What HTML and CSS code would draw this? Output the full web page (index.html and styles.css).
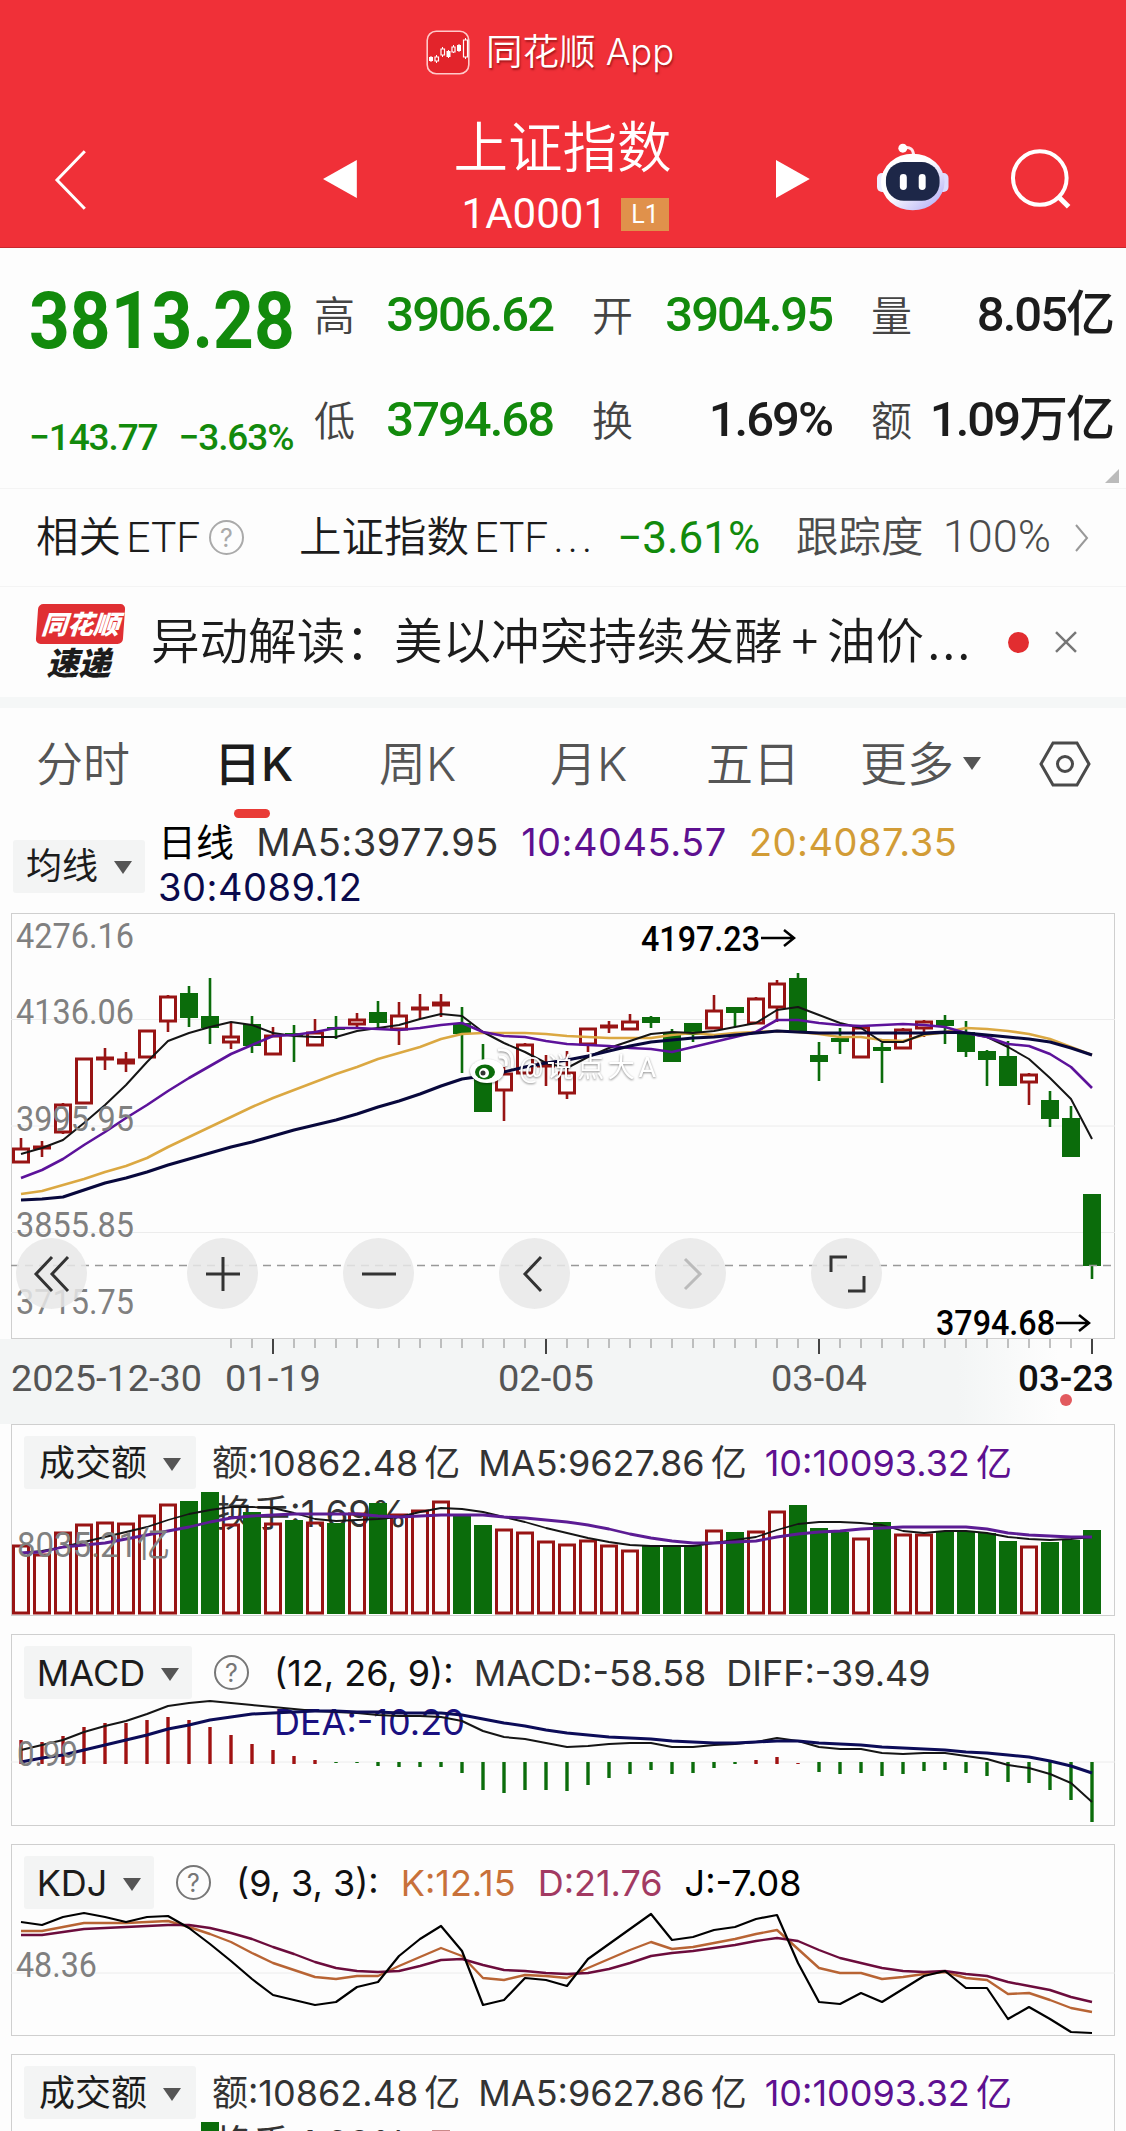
FILE: index.html
```html
<!DOCTYPE html>
<html lang="zh-CN">
  <head>
    <meta charset="UTF-8" />
    <meta name="viewport" content="width=device-width, initial-scale=1.0" />
    <title>上证指数 1A0001</title>
    <link rel="stylesheet" href="styles.css">
  </head>

  <body>
    <header>
      <div class="brand">
        <svg width="44" height="45" viewBox="0 0 44 45">
          <rect x="1.2" y="1.2" width="41.6" height="42.6" rx="9" fill="#e3242b" stroke="#ffc9c9" stroke-width="1.6" />
          <path d="M5 26v6M10.500 25v8M16.500 17v10M22.500 20v8M27.500 15v8M33 14v8M39.500 8v21" stroke="#fff" stroke-width="1" />
          <path d="M3 27h4v4h-4zM20.500 21h4v6h-4zM31 15h4v6h-4z" fill="#fff" />
          <path d="M9 27h3.500v4h-3.500zM15 19h3.500v6h-3.500zM26 17h3v5h-3zM37.500 10h4v17h-4z" fill="#dc1d24" stroke="#fff" stroke-width="1.200" />
        </svg>
        <span>同花顺 App</span>
      </div>
      <nav class="topbar">
        <svg class="back" width="34" height="62" viewBox="0 0 34 62"><path d="M31 2L3 31l28 29" fill="none" stroke="#fff" stroke-width="3" /></svg>
        <svg class="prev" width="34" height="38" viewBox="0 0 34 38"><path d="M0 19L34 0v38z" fill="#fff" /></svg>
        <div class="title">
          <h1>上证指数</h1>
          <p>1A0001<b>L1</b></p>
        </div>
        <svg class="next" width="34" height="38" viewBox="0 0 34 38"><path d="M34 19L0 0v38z" fill="#fff" /></svg>
        <svg class="robot" width="74" height="68" viewBox="0 0 74 68">
          <defs>
            <linearGradient id="shell" x1="0" y1="0" x2="1" y2="1">
              <stop offset="0.450" stop-color="#fff" />
              <stop offset="1" stop-color="#a9a4f5" />
            </linearGradient>
          </defs>
          <path d="M27 5q11-3 11 9" fill="none" stroke="#ffe9ee" stroke-width="3" />
          <circle cx="27" cy="5" r="4.500" fill="#fff" />
          <rect x="1" y="30" width="11" height="19" rx="5" fill="#eef" />
          <rect x="62" y="30" width="11" height="19" rx="5" fill="#dcdcff" />
          <ellipse cx="37" cy="39" rx="32" ry="28.500" fill="url(#shell)" />
          <rect x="10" y="19" width="54" height="39" rx="18" fill="#1d2748" />
          <rect x="24" y="31" width="7" height="16" rx="3.500" fill="#fff" />
          <rect x="43" y="31" width="7" height="16" rx="3.500" fill="#fff" />
        </svg>
        <svg class="find" width="62" height="62" viewBox="0 0 62 62"><g fill="none" stroke="#fff" stroke-width="4"><circle cx="30" cy="30" r="27" /><path d="M48 48l11 11" stroke-width="5" /></g></svg>
      </nav>
    </header>

    <section class="quote">
      <div class="price">
        <strong>3813.28</strong>
        <p><span>−143.77</span><span>−3.63%</span></p>
      </div>
      <dl>
        <div><dt>高</dt><dd class="down">3906.62</dd></div>
        <div><dt>开</dt><dd class="down">3904.95</dd></div>
        <div><dt>量</dt><dd>8.05亿</dd></div>
        <div><dt>低</dt><dd class="down">3794.68</dd></div>
        <div><dt>换</dt><dd>1.69%</dd></div>
        <div><dt>额</dt><dd>1.09万亿</dd></div>
      </dl>
      <i class="corner"></i>
    </section>

    <section class="etf">
      <span class="rel">相关 ETF</span>
      <i class="help">?</i>
      <span class="name">上证指数 ETF <i>...</i></span>
      <span class="rate">−3.61%</span>
      <span class="track">跟踪度 <b>100%</b></span>
      <svg width="16" height="30" viewBox="0 0 16 30"><path d="M2 2l11 13L2 28" fill="none" stroke="#999" stroke-width="2" /></svg>
    </section>

    <section class="news">
      <div class="tag"><b>同花顺</b><em>速递</em></div>
      <p>异动解读：美以冲突持续发酵 + 油价<i>...</i></p>
      <i class="dot"></i>
      <svg width="24" height="24" viewBox="0 0 24 24"><path d="M2 2l20 20M22 2L2 22" stroke="#777" stroke-width="2.500" /></svg>
    </section>

    <ul class="tabs">
      <li>分时</li>
      <li class="active">日K</li>
      <li>周K</li>
      <li>月K</li>
      <li>五日</li>
      <li class="more">更多<i class="arrow"></i></li>
      <li class="gear">
        <svg width="52" height="46" viewBox="0 0 52 46"><g fill="none" stroke="#4a4a4a" stroke-width="3"><path d="M14 2h24l12 21-12 21H14L2 23z" /><circle cx="26" cy="23" r="7.500" /></g></svg>
      </li>
    </ul>

    <section class="ma">
      <button>均线<i class="arrow"></i></button>
      <p>
        <span class="cn">日线</span>
        <span>MA5:3977.95</span>
        <span class="purple">10:4045.57</span>
        <span class="gold">20:4087.35</span>
        <span class="navy">30:4089.12</span>
      </p>
    </section>

    <section class="panel kline">
      <svg id="kline" class="chart"></svg>
      <div class="tools">
        <button><svg width="40" height="40" viewBox="0 0 40 40"><path d="M20 3L4 20l16 17M36 3L20 20l16 17" /></svg></button>
        <button><svg width="40" height="40" viewBox="0 0 40 40"><path d="M20 3v34M3 20h34" /></svg></button>
        <button><svg width="40" height="40" viewBox="0 0 40 40"><path d="M3 20h34" /></svg></button>
        <button><svg width="40" height="40" viewBox="0 0 40 40"><path d="M26 3L10 20l16 17" /></svg></button>
        <button class="off"><svg width="40" height="40" viewBox="0 0 40 40"><path d="M14 5l15 15-15 15" /></svg></button>
        <button><svg width="40" height="40" viewBox="0 0 40 40"><path d="M4 18V3h16M37 22v15H21" /></svg></button>
      </div>
    </section>
    <svg id="axis" class="axis"></svg>

    <section class="panel volume">
      <div class="legend">
        <button>成交额<i class="arrow"></i></button>
        <span>额:10862.48 亿</span>
        <span>MA5:9627.86 亿</span>
        <span class="purple">10:10093.32 亿</span>
      </div>
      <p class="turnover">换手:1.69%</p>
      <svg class="chart vol"></svg>
    </section>

    <section class="panel macd">
      <div class="legend">
        <button>MACD<i class="arrow"></i></button>
        <i class="help">?</i>
        <span class="args">(12, 26, 9):</span>
        <span>MACD:-58.58</span>
        <span>DIFF:-39.49</span>
      </div>
      <p class="dea">DEA:-10.20</p>
      <svg id="macd" class="chart"></svg>
    </section>

    <section class="panel kdj">
      <div class="legend">
        <button>KDJ<i class="arrow"></i></button>
        <i class="help">?</i>
        <span class="args">(9, 3, 3):</span>
        <span class="orange">K:12.15</span>
        <span class="wine">D:21.76</span>
        <span class="black">J:-7.08</span>
      </div>
      <svg id="kdj" class="chart"></svg>
    </section>

    <section class="panel volume">
      <div class="legend">
        <button>成交额<i class="arrow"></i></button>
        <span>额:10862.48 亿</span>
        <span>MA5:9627.86 亿</span>
        <span class="purple">10:10093.32 亿</span>
      </div>
      <p class="turnover">换手:1.69%</p>
      <svg class="chart vol"></svg>
    </section>

    <script src="script.js"></script>
  </body>
</html>
```
FILE: styles.css
```css
* {
  box-sizing: border-box;
  margin: 0;
  padding: 0;
}

html {
  height: 2131px;
  overflow: hidden;
}

body {
  width: 1126px;
  height: 2131px;
  overflow: hidden;
  background: #fdfdfd;
  color: #1c1c1c;
  font-family: Roboto, "Noto Sans CJK SC", sans-serif;
}

svg {
  display: block;
}

button {
  border: none;
  font: inherit;
  color: #1c1c1c;
}

i,
em {
  font-style: normal;
}

header {
  height: 248px;
  padding-top: 30px;
  background: #f03038;
  color: #fff;
  border-bottom: 1px solid #c8282e;
}

.brand {
  display: flex;
  align-items: center;
  height: 45px;
  padding-left: 426px;
  gap: 16px;
  font: 350 36.5px/45px Inter, "Noto Sans CJK SC", sans-serif;
  text-shadow: 1px 2px 2px rgba(90, 0, 0, 0.5);
}

.topbar {
  display: flex;
  align-items: center;
  padding: 47px 54px 0 54px;
}

.back {
  margin-top: 2px;
  margin-right: 235px;
}

.title {
  width: 220px;
  margin-top: -11px;
  margin-left: 97px;
  margin-right: 104px;
}

.title h1 {
  font: 350 54.5px/66px "Noto Sans CJK SC", sans-serif;
  white-space: nowrap;
}

.title p {
  display: flex;
  align-items: center;
  padding-left: 8px;
  margin-top: 15px;
  font-size: 42px;
  line-height: 44px;
}

.title b {
  width: 48px;
  height: 33px;
  margin-left: 14px;
  background: #e0914b;
  font: 400 25px/34px Roboto, sans-serif;
  text-align: center;
}

.robot {
  margin: -5px 61px 0 66px;
}

.quote {
  position: relative;
  display: flex;
  height: 240px;
  padding: 0 13px 0 29px;
}

.price {
  width: 285px;
  color: #128a0c;
}

.price strong {
  display: block;
  height: 148px;
  padding-top: 26px;
  font: 700 80px/94px Roboto, sans-serif;
  transform: scaleX(0.89);
  transform-origin: left;
}

.price p {
  display: flex;
  gap: 21px;
  padding-top: 20px;
  font: 500 37px/44px Roboto, sans-serif;
  letter-spacing: -1.1px;
}

dl {
  flex: 1;
  display: grid;
  grid-template-columns: 239px 279px 1fr;
  grid-template-rows: 105px 105px;
  padding-top: 14px;
}

dl div {
  display: flex;
  align-items: center;
  justify-content: space-between;
  padding-left: 39px;
}

dl div:nth-child(3n + 1) {
  padding-left: 0;
}

dt {
  margin-top: -3px;
  font: 350 41px/60px "Noto Sans CJK SC", sans-serif;
  color: #444;
}

dd {
  font-size: 49px;
  line-height: 60px;
  font-weight: 500;
  letter-spacing: -2px;
  white-space: nowrap;
}

.down {
  color: #128a0c;
}

.corner {
  position: absolute;
  right: 7px;
  bottom: 5px;
  border: 7px solid #bbb;
  border-top-color: transparent;
  border-left-color: transparent;
}

.etf {
  display: flex;
  align-items: center;
  height: 98px;
  padding: 0 36px;
  border-top: 1px solid #f4f4f4;
  font: 350 42.5px/60px Roboto, "Noto Sans CJK SC", sans-serif;
  word-spacing: -5px;
  white-space: nowrap;
}

.help {
  flex: none;
  width: 35px;
  height: 35px;
  border: 2px solid #777;
  border-radius: 50%;
  color: #777;
  font: 400 25px/32px Inter, sans-serif;
  text-align: center;
}

.etf .rel {
  width: 163px;
}

.etf .help {
  margin-left: 10px;
  border-color: #aaa;
  color: #aaa;
}

.etf .name {
  width: 318px;
  margin-left: 55px;
}

.etf .name i {
  letter-spacing: 4px;
}

.etf .rate {
  width: 179px;
  color: #128a0c;
  font-size: 44px;
  font-weight: 400;
}

.etf .track {
  width: 278px;
  color: #4c4c4c;
}

.etf .track b {
  margin-left: 14px;
  font-size: 45px;
  font-weight: 350;
}

.news {
  display: flex;
  align-items: center;
  height: 111px;
  padding: 0 48px 0 37px;
  border-top: 1px solid #f4f4f4;
}

.tag {
  width: 87px;
  margin-top: -2px;
  font: italic 900 29px/34px "Noto Sans CJK SC", sans-serif;
  text-align: center;
}

.tag b {
  display: block;
  height: 40px;
  border-radius: 5px;
  background: #e02f33;
  color: #fff;
  font-size: 26px;
  line-height: 38px;
  transform: skewX(-4deg);
}

.tag em {
  display: block;
  margin-left: -4px;
  font-size: 32px;
  font-style: italic;
}

.news p {
  width: 859px;
  margin-top: -8px;
  padding-left: 27px;
  font: 350 48.6px/70px "Noto Sans CJK SC", sans-serif;
  word-spacing: -2px;
  white-space: nowrap;
}

.news p i {
  margin-left: 3px;
  letter-spacing: 2px;
}

.news .dot {
  width: 21px;
  height: 21px;
  margin: 0 25px 0 26px;
  border-radius: 50%;
  background: #e22d30;
}

.tabs {
  display: flex;
  align-items: center;
  height: 121px;
  padding: 2px 0 0 36px;
  border-top: 11px solid #f5f7f7;
  list-style: none;
  color: #555;
  font: 350 47px/66px Inter, "Noto Sans CJK SC", sans-serif;
  white-space: nowrap;
}

.tabs li {
  position: relative;
  flex: none;
  width: 171px;
}

.tabs li:nth-child(1) {
  width: 178px;
}

.tabs .active {
  width: 165px;
  color: #1c1c1c;
  font-weight: 500;
}

.tabs .active::after {
  content: "";
  position: absolute;
  left: 20px;
  bottom: -21px;
  width: 36px;
  height: 9px;
  border-radius: 5px;
  background: #e93b36;
}

.tabs li:nth-child(4) {
  width: 156px;
}

.tabs li:nth-child(5) {
  width: 154px;
}

.tabs .more {
  width: 179px;
}

.tabs .gear {
  width: 52px;
}

.arrow {
  display: inline-block;
  margin-left: 16px;
  vertical-align: 5px;
  border: 9px solid transparent;
  border-top: 13px solid #555;
  border-bottom: 0;
}

.tabs .arrow {
  margin-left: 9px;
  vertical-align: 11px;
}

.ma {
  display: flex;
  height: 95px;
  padding-left: 13px;
  font: 400 36px/45px Inter, "Noto Sans CJK SC", sans-serif;
}

.ma button,
.legend button {
  height: 53px;
  background: #f3f4f4;
  border-radius: 3px;
}

.ma button {
  width: 132px;
  margin-top: 22px;
}

.ma p {
  width: 850px;
  padding: 2px 0 0 13px;
  color: #333;
  font-size: 38px;
  letter-spacing: 0.5px;
}

.ma span {
  margin-right: 11px;
}

.ma .cn {
  margin-right: 11px;
  color: #000;
  letter-spacing: 0;
}

.purple {
  color: #5e1090;
}

.ma .gold {
  color: #d29c36;
}

.ma .navy {
  color: #0a0a4c;
}

.ma .purple {
  color: #5e1090;
}

.orange {
  color: #c8713a;
}

.wine {
  color: #a23a62;
}

.panel .black {
  color: #000;
}

.panel {
  position: relative;
  width: 1104px;
  height: 192px;
  margin: 0 0 18px 11px;
  border: 1px solid #cfcfcf;
}

.panel.kline {
  height: 426px;
  margin-bottom: 0;
}

.chart {
  position: absolute;
  left: -1px;
  top: -1px;
  width: 1104px;
  height: 100%;
  overflow: visible;
}

.tools {
  position: absolute;
  left: 4px;
  bottom: 29px;
  display: flex;
  gap: 85px;
}

.tools button {
  display: flex;
  align-items: center;
  justify-content: center;
  width: 71px;
  height: 71px;
  border-radius: 50%;
  background: rgba(232, 232, 232, 0.85);
}

.tools button:first-child {
  margin-right: 15px;
}

.tools path {
  fill: none;
  stroke: #333;
  stroke-width: 3;
}

.tools .off path {
  stroke: #bbb;
}

.axis {
  width: 1126px;
  height: 85px;
  background: linear-gradient(90deg, #f3f5f5 85%, #fdfdfd 94%);
}

.legend {
  display: flex;
  align-items: center;
  height: 53px;
  margin: 11px 0 0 12px;
  color: #333;
  font: 400 36px/44px Inter, "Noto Sans CJK SC", sans-serif;
  white-space: nowrap;
}

.legend span {
  margin-left: 20px;
}

.volume span {
  margin-left: 16px;
  word-spacing: -4px;
}

.volume span + span {
  margin-left: 18px;
}

.legend .help {
  margin-left: 22px;
}

.legend .args {
  margin-left: 25px;
  color: #111;
}

.kdj span {
  margin-left: 22px;
}

.volume button {
  width: 172px;
}

.macd button {
  width: 168px;
}

.kdj button {
  width: 130px;
}

.turnover,
.dea {
  margin-left: 204px;
  font: 400 37px/50px Inter, "Noto Sans CJK SC", sans-serif;
  color: #333;
}

.dea {
  margin-left: 262px;
  margin-top: -2px;
  font-size: 36px;
  color: #1a1080;
}

.panel text {
  font-family: Roboto, "Noto Sans CJK SC", sans-serif;
  font-size: 35px;
  fill: #808080;
}

.panel .mark {
  fill: #000;
  font-weight: 500;
}

.water {
  filter: drop-shadow(0 1px 1px rgba(0, 0, 0, 0.45));
}

.panel .water text {
  fill: #fff;
  font-size: 27px;
}

.axis text {
  font-family: Roboto, sans-serif;
  font-size: 36px;
  fill: #555;
}

.axis .last {
  fill: #111;
  font-weight: 500;
}
```
FILE: script.js
```js
// each day: u/d, then high, body top, body bottom, low (px from the top of the chart)
var days = [
  ['u', 225, 235, 250, 250], ['u', 228, 233, 235, 244], ['u', 190, 191, 220, 221], ['u', 145, 145, 191, 191],
  ['u', 135, 144, 147, 157], ['u', 139, 146, 151, 159], ['u', 117, 117, 145, 145], ['u', 82, 83, 109, 119],
  ['d', 73, 80, 105, 114], ['d', 65, 103, 115, 131], ['u', 109, 123, 130, 136], ['d', 103, 111, 133, 140],
  ['u', 114, 122, 142, 142], ['d', 112, 120, 123, 149], ['u', 106, 119, 133, 133], ['d', 103, 114, 117, 126],
  ['u', 100, 106, 112, 115], ['d', 88, 99, 110, 115], ['u', 89, 102, 117, 132], ['u', 81, 94, 96, 106],
  ['u', 81, 89, 93, 104], ['d', 94, 110, 121, 160], ['d', 131, 150, 199, 199], ['u', 154, 160, 178, 208],
  ['u', 130, 131, 161, 161], ['u', 142, 150, 154, 173], ['u', 138, 159, 181, 186], ['u', 115, 115, 132, 139],
  ['u', 108, 112, 114, 120], ['u', 101, 108, 117, 117], ['d', 103, 104, 110, 115], ['d', 116, 119, 149, 149],
  ['d', 110, 110, 122, 129], ['u', 82, 97, 116, 116], ['d', 94, 94, 100, 114], ['u', 84, 85, 111, 111],
  ['u', 67, 70, 95, 109], ['d', 60, 65, 119, 119], ['d', 129, 142, 149, 168], ['d', 115, 125, 129, 141],
  ['u', 112, 114, 145, 145], ['d', 130, 134, 138, 170], ['u', 115, 116, 136, 136], ['u', 107, 108, 116, 124],
  ['d', 102, 107, 113, 131], ['d', 108, 119, 139, 144], ['d', 137, 138, 147, 173], ['d', 128, 143, 173, 173],
  ['u', 160, 161, 170, 192], ['d', 178, 187, 206, 214], ['d', 193, 205, 244, 244], ['d', 281, 281, 353, 366]
];

var ma5 = [241, 235, 227, 210, 192, 172, 149, 128, 120, 114, 109, 112, 120, 123, 124, 124, 118, 115, 112, 106, 101, 103, 119, 130, 139, 150, 155, 144, 135, 128, 121, 119, 120, 118, 114, 110, 97, 94, 102, 110, 115, 129, 129, 121, 120, 120, 124, 134, 146, 165, 186, 226];
var ma10 = [265, 257, 246, 232, 219, 205, 192, 178, 165, 153, 141, 132, 123, 122, 119, 115, 115, 116, 117, 115, 112, 110, 119, 123, 124, 128, 131, 132, 133, 135, 136, 139, 134, 129, 124, 119, 107, 107, 110, 112, 113, 112, 111, 112, 114, 120, 124, 131, 133, 141, 154, 175];
var ma20 = [281, 278, 272, 266, 259, 253, 245, 234, 224, 214, 204, 194, 185, 177, 169, 161, 154, 146, 140, 134, 126, 121, 120, 120, 120, 121, 123, 124, 125, 125, 125, 122, 120, 122, 120, 119, 118, 119, 121, 124, 124, 127, 128, 122, 119, 115, 116, 118, 121, 126, 134, 142];
var ma30 = [287, 286, 284, 277, 270, 265, 259, 252, 246, 240, 234, 229, 223, 217, 212, 207, 201, 194, 188, 181, 173, 166, 163, 159, 154, 150, 147, 143, 138, 133, 129, 127, 125, 124, 122, 120, 118, 119, 120, 120, 120, 120, 120, 120, 119, 120, 122, 124, 126, 129, 135, 142];

var volume = [69, 60, 82, 90, 92, 91, 99, 110, 113, 122, 90, 102, 91, 94, 92, 91, 101, 111, 100, 104, 113, 98, 89, 85, 82, 73, 70, 74, 69, 64, 69, 68, 68, 84, 82, 83, 103, 109, 86, 82, 76, 92, 80, 80, 83, 83, 81, 73, 68, 72, 74, 84];
var vol5 = [129, 127, 123, 118, 113, 108, 103, 96, 90, 86, 83, 83, 84, 89, 95, 97, 96, 95, 93, 88, 84, 85, 88, 93, 98, 104, 109, 114, 118, 121, 122, 122, 122, 119, 116, 113, 106, 100, 98, 98, 99, 101, 107, 109, 107, 107, 109, 113, 115, 116, 115, 113];
var vol10 = [129, 128, 123, 121, 119, 115, 111, 107, 103, 98, 94, 92, 91, 90, 90, 90, 90, 92, 93, 92, 91, 91, 91, 93, 94, 96, 98, 101, 105, 110, 114, 117, 119, 119, 118, 117, 113, 110, 108, 107, 105, 104, 103, 103, 103, 103, 105, 109, 111, 112, 113, 113];

var macd = [24, 22, 28, 37, 41, 41, 44, 47, 44, 37, 29, 20, 14, 8, 4, -1, -1, -4, -5, -5, -5, -11, -28, -31, -28, -28, -29, -23, -16, -12, -8, -12, -11, -6, -2, 4, 7, 1, -10, -12, -11, -14, -12, -9, -8, -11, -14, -20, -21, -28, -38, -60];
var diff = [116, 111, 106, 98, 92, 87, 80, 72, 69, 67, 69, 71, 73, 75, 77, 78, 79, 81, 82, 82, 83, 87, 97, 103, 105, 109, 113, 112, 110, 109, 109, 113, 113, 111, 110, 108, 104, 107, 113, 115, 115, 119, 120, 119, 119, 122, 125, 131, 134, 140, 149, 168];
var dea = [128, 124, 121, 116, 111, 106, 101, 95, 91, 86, 83, 80, 79, 78, 77, 77, 78, 78, 79, 79, 79, 81, 85, 89, 92, 96, 99, 101, 103, 104, 105, 107, 108, 109, 109, 108, 107, 107, 109, 110, 111, 113, 114, 115, 116, 118, 119, 121, 123, 127, 132, 139];

var k = [87, 87, 83, 79, 79, 79, 78, 77, 83, 90, 98, 109, 119, 126, 133, 135, 132, 132, 122, 113, 104, 112, 134, 136, 131, 132, 134, 124, 115, 106, 98, 105, 103, 99, 95, 90, 86, 105, 124, 129, 129, 135, 133, 130, 128, 134, 136, 150, 149, 156, 164, 168];
var d = [91, 91, 88, 85, 84, 83, 82, 81, 81, 84, 89, 95, 103, 110, 118, 124, 127, 128, 127, 122, 116, 115, 121, 126, 127, 129, 130, 129, 125, 119, 112, 109, 107, 104, 101, 97, 94, 97, 106, 114, 119, 124, 127, 128, 127, 130, 132, 138, 142, 146, 153, 158];
var j = [78, 81, 73, 69, 73, 78, 73, 72, 84, 100, 117, 135, 151, 156, 161, 158, 143, 138, 112, 95, 82, 107, 161, 156, 134, 136, 142, 115, 100, 85, 70, 96, 93, 86, 83, 75, 71, 119, 158, 160, 149, 158, 145, 132, 127, 144, 144, 175, 163, 175, 188, 189];

var RED = '#981414';
var GREEN = '#0b6c0b';

function x(i) {
  return 10 + i * 21;
}

function line(values, color, width) {
  var points = values.map(function (y, i) {
    return x(i) + ',' + y;
  });
  return '<polyline fill="none" stroke-linejoin="round" stroke="' + color + '" stroke-width="' + width + '" points="' + points.join(' ') + '"/>';
}

function rule(y) {
  return '<path d="M0 ' + y + 'H1104" stroke="#ececec"/>';
}

function box(i, top, bottom, up, fill) {
  if (up) {
    return '<rect x="' + (x(i) - 7.5) + '" y="' + (top + 1) + '" width="15" height="' + Math.max(bottom - top - 2, 1) + '" fill="' + fill + '" stroke="' + RED + '" stroke-width="3"/>';
  }
  return '<rect x="' + (x(i) - 9) + '" y="' + top + '" width="18" height="' + (bottom - top) + '" fill="' + GREEN + '"/>';
}

function label(left, y, text, width, cls) {
  return '<text class="' + (cls || '') + '" x="' + left + '" y="' + y + '" textLength="' + width + '" lengthAdjust="spacingAndGlyphs">' + text + '</text>';
}

// candles
var out = rule(106.5) + rule(213) + rule(319.5);
days.forEach(function (day, i) {
  out += '<path d="M' + x(i) + ' ' + day[1] + 'V' + day[4] + '" stroke="' + (day[0] == 'u' ? RED : GREEN) + '" stroke-width="2.6"/>';
  out += box(i, day[2], day[3], day[0] == 'u', '#fff');
});
out += line(ma20, '#dba842', 2.6) + line(ma5, '#151515', 2) + line(ma10, '#5c129a', 2.6) + line(ma30, '#08083c', 3);
out += '<path d="M0 352.5H1104" stroke="#999" stroke-width="1.5" stroke-dasharray="8 6"/>';
out += label(5, 35, '4276.16', 118) + label(5, 111, '4136.06', 118) + label(5, 218, '3995.95', 118);
out += label(5, 324, '3855.85', 118) + label(5, 401, '3715.75', 118);
out += label(630, 38, '4197.23', 119, 'mark') + label(925, 422, '3794.68', 119, 'mark');
out += '<path d="M750 25h33m-10-8l10 8-10 8M1045 410h33m-10-8l10 8-10 8" fill="none" stroke="#000" stroke-width="2.5"/>';
// watermark
out += '<g class="water"><ellipse cx="476" cy="158" rx="17" ry="12" fill="#fff"/><ellipse cx="474" cy="159" rx="10" ry="7.5" fill="#0b6c0b"/><circle cx="473" cy="160" r="5" fill="#fff"/><circle cx="472" cy="160" r="2.500" fill="#333"/>';
out += '<path d="M488 144q9-1 7 9M487 137q17-2 14 18" fill="none" stroke="#fff" stroke-width="3"/>';
out += '<text x="508" y="164" textLength="137">@说点大A</text></g>';
document.getElementById('kline').innerHTML = out;

// date axis
out = '';
for (var i = 10; i < 52; i++) {
  var major = i % 13 == 12;
  out += '<path d="M' + (x(i) + 11) + ' 0v' + (major ? 15 : 9) + '" stroke="' + (major ? '#444' : '#999') + '" stroke-width="' + (major ? 2 : 1.2) + '"/>';
}
out += label(11, 52, '2025-12-30', 191) + label(225, 52, '01-19', 96) + label(498, 52, '02-05', 96) + label(771, 52, '03-04', 96);
out += label(1018, 52, '03-23', 96, 'last') + '<circle cx="1066" cy="61" r="6" fill="#e25a5e"/>';
document.getElementById('axis').innerHTML = out;

// turnover bars, the panel is shown twice
out = '';
volume.forEach(function (h, i) {
  out += box(i, 190 - h, 190, days[i][0] == 'u', 'none');
});
out += line(vol5, '#151515', 1.8) + line(vol10, '#5c1c94', 2.8) + label(6, 133, '8035.21亿', 153);
document.querySelectorAll('.vol').forEach(function (svg) {
  svg.innerHTML = out;
});

out = rule(128);
macd.forEach(function (v, i) {
  out += '<path d="M' + x(i) + ' ' + (v > 0 ? 130 : 128) + 'v' + -v + '" stroke="' + (v > 0 ? '#a01212' : '#0b6c0b') + '" stroke-width="3.4"/>';
});
out += line(diff, '#151515', 2) + line(dea, '#0c0c58', 3) + label(6, 132, '0.99', 61);
document.getElementById('macd').innerHTML = out;

out = rule(129) + line(k, '#b86434', 2.4) + line(d, '#6c0c3c', 2.4) + line(j, '#000', 2.2) + label(5, 133, '48.36', 81);
document.getElementById('kdj').innerHTML = out;
```
